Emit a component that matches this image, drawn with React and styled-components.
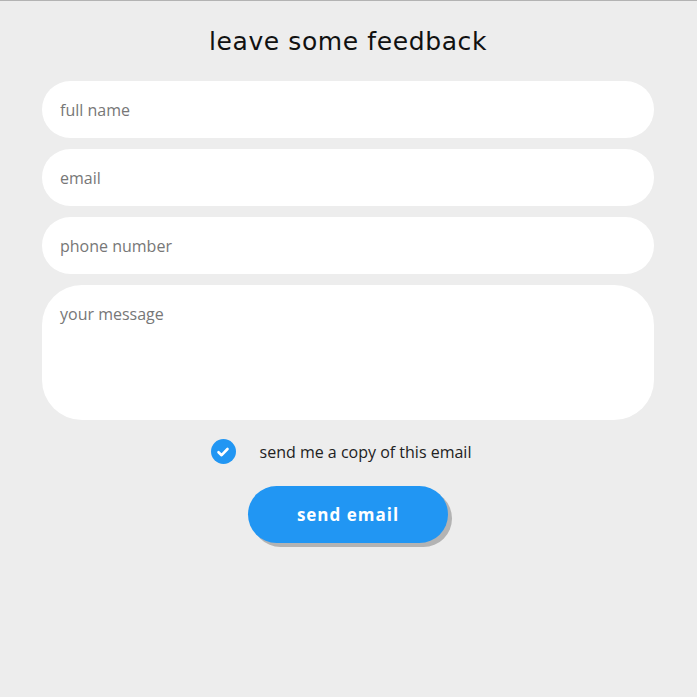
import styled, { createGlobalStyle } from "styled-components"

const GlobalStyle = createGlobalStyle`
    html, body {
        margin: 0;
        padding: 0;
        background: #ededed;
    }
    body {
        font-family: "Open Sans", "Liberation Sans", sans-serif;
    }
`

const Page = styled.div`
    min-height: 697px;
    border-top: 1px solid #b3b3b3;
    box-sizing: border-box;
    background: #ededed;
    padding-left: 42px;
`

const Form = styled.form`
    width: 612px;
    padding-top: 22px;
    display: flex;
    flex-direction: column;
    align-items: center;
`

const Title = styled.h2`
    margin: 0 0 20px;
    font-family: "DejaVu Sans", sans-serif;
    font-weight: normal;
    font-size: 25px;
    letter-spacing: 0.6px;
    color: #111;
    line-height: 38px;
`

const Fields = styled.div`
    width: 100%;
    display: flex;
    flex-direction: column;
    gap: 11px;
`

const Input = styled.input`
    box-sizing: border-box;
    width: 100%;
    height: 57px;
    border: none;
    border-radius: 29px;
    padding: 0 18px;
    background: #fff;
    font-family: "Open Sans", sans-serif;
    font-size: 16px;
    color: #333;
    outline: none;

    &::placeholder {
        color: #777;
    }
`

const Message = styled.textarea`
    box-sizing: border-box;
    width: 100%;
    height: 135px;
    border: none;
    border-radius: 40px;
    padding: 18px 18px;
    background: #fff;
    font-family: "Open Sans", sans-serif;
    font-size: 16px;
    color: #333;
    resize: none;
    outline: none;

    &::placeholder {
        color: #777;
    }
`

const CheckRow = styled.label`
    margin-top: 19px;
    padding-right: 14px;
    display: flex;
    align-items: center;
    gap: 24px;
    font-size: 16px;
    color: #222;
    cursor: pointer;
`

const CheckCircle = styled.span`
    width: 25px;
    height: 25px;
    border-radius: 50%;
    background: #2196f3;
    display: flex;
    align-items: center;
    justify-content: center;
`

const SendButton = styled.button`
    margin-top: 22px;
    width: 200px;
    height: 57px;
    border: none;
    border-radius: 29px;
    background: #2196f3;
    box-shadow: 4px 4px 0 #b3b3b3;
    color: #fff;
    font-family: "Open Sans", sans-serif;
    font-weight: bold;
    font-size: 17px;
    letter-spacing: 1px;
    cursor: pointer;
`

function App () {
    return (
        <Page>
            <GlobalStyle />
            <Form onSubmit={(e) => e.preventDefault()}>
                <Title>leave some feedback</Title>
                <Fields>
                    <Input placeholder="full name" />
                    <Input placeholder="email" />
                    <Input placeholder="phone number" />
                    <Message placeholder="your message" />
                </Fields>
                <CheckRow>
                    <CheckCircle>
                        <svg width="14" height="14" viewBox="0 0 14 14">
                            <path d="M2.5 7.2 L5.6 10.2 L11.5 4" stroke="#fff" strokeWidth="2.6" fill="none" strokeLinecap="round" strokeLinejoin="round" />
                        </svg>
                    </CheckCircle>
                    send me a copy of this email
                </CheckRow>
                <SendButton>send email</SendButton>
            </Form>
        </Page>
    )
}

export default App
